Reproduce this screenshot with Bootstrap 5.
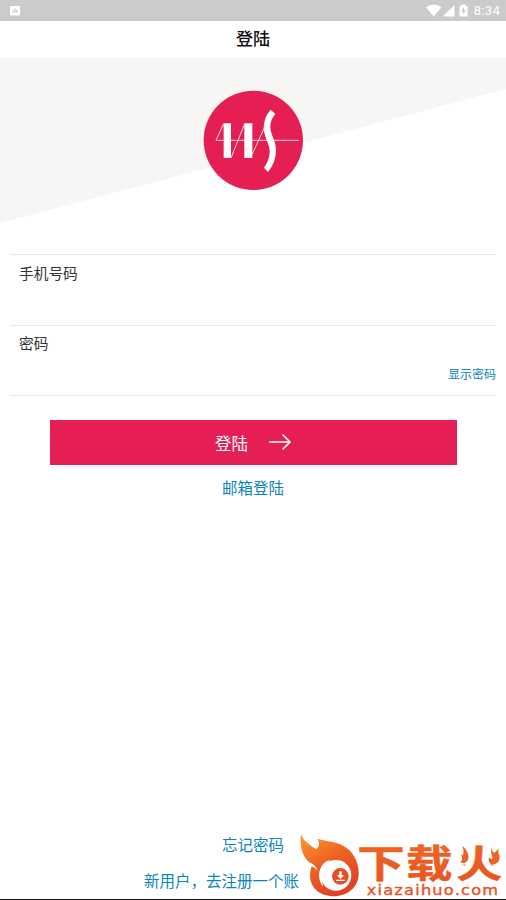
<!DOCTYPE html>
<html lang="zh-CN">
<head>
<meta charset="utf-8">
<meta name="viewport" content="width=device-width, initial-scale=1">
<title>登陆</title>
<link rel="stylesheet" href="https://cdn.jsdelivr.net/npm/bootstrap@5.3.0/dist/css/bootstrap.min.css">
<style>
body { font-family: "Noto Sans", "Noto Sans CJK SC", sans-serif; color: #333; }
svg { display: block; flex: none; }
.screen { height: 900px; border-bottom: 1px solid #111; }
.status { height: 21px; background: #cbcbcb; color: #fff; padding: 0 6px 0 10px; }
.clock { font: 13px/21px Roboto, sans-serif; letter-spacing: .3px; }
.title { height: 37px; font-size: 17px; line-height: 36px; color: #111; font-weight: 500; }
.hero { height: 166px; padding-top: 22px; }
.hero::before { content: ""; position: absolute; inset: 0; background: #f7f6f5; clip-path: polygon(0 0, 100% 0, 100% 31px, 0 165px); }
.fields { margin: 30px 10px 0; border-top: 1px solid #e9e9e9; }
.entry { border-bottom: 1px solid #e9e9e9; padding: 8px 0 0 9px; font-size: 14.7px; line-height: 20px; }
.phone { height: 71px; }
.pass { height: 70px; padding-top: 7px; }
.show-pass { font-size: 12px; margin-top: 12px; }
.blue { color: #0c84bd; text-decoration: none; }
.login { margin: 24px 49px 0 50px; height: 45px; background: #e51e54; color: #fff; font-size: 16.5px; border-radius: 0; padding: 3px 0 0 4px; }
.login:hover { background: #d01849; color: #fff; }
.login svg { margin-top: -4px; }
.alt { font-size: 15.5px; line-height: 24px; }
.mail { margin-top: 11px; }
.foot { padding-bottom: 6px; gap: 12px; }
.register { margin-right: 63px; }
.brand { position: absolute; left: 290px; top: 825px; }
</style>
<script src="https://cdn.jsdelivr.net/npm/bootstrap@5.3.0/dist/js/bootstrap.bundle.min.js"></script>
</head>
<body>
<main class="screen position-relative d-flex flex-column overflow-hidden">
  <div class="status d-flex align-items-center">
    <svg width="10" height="10" viewBox="0 0 10 10"><rect width="10" height="9.5" rx="1" fill="#fff"/><path d="M3 7V4.5L5 3l2 1.5V7M3.5 5.5h3" fill="none" stroke="#c4c4c4"/></svg>
    <svg class="ms-auto" width="44" height="16" viewBox="0 0 44 16" fill="#fff"><path d="M0 4.2Q7.700 -1.200 15.500 4.200L7.700 13.500Z"/><path d="M16.500 13.500L28.500 2v11.500Z"/><path fill-rule="evenodd" d="M33.500 3h2V1.500h4V3h2v10.500h-8Zm4.500 1l-3 4.500h2v3l3-4.500h-2Z"/></svg>
    <span class="clock ms-1">8:34</span>
  </div>
  <div class="title text-center">登陆</div>
  <div class="hero position-relative d-flex justify-content-center">
    <svg class="position-relative" width="120" height="120" viewBox="0 0 360 360">
      <circle cx="181" cy="181" r="149" fill="#e51e54"/>
      <path d="M92 130h22v104H92zM154 130h24v104h-24z" fill="#fff"/>
      <path d="M318 181H69L92 131M114 234L155 131M178 222L216 139" fill="none" stroke="#fff" stroke-width="2.500"/>
      <path d="M233 89L247 102Q231 120 232 142C233 165 249 184 249 210Q249 247 225 276L213 263Q230 240 230 214C230 190 212 171 212 142Q213 111 233 89Z" fill="#fff"/>
    </svg>
  </div>
  <form class="fields">
    <div class="entry phone">手机号码</div>
    <div class="entry pass d-flex flex-column">密码<a href="#" class="blue show-pass align-self-end">显示密码</a></div>
  </form>
  <button class="btn login d-flex align-items-center justify-content-center" type="button">登陆
    <svg class="ms-3" width="32" height="20" viewBox="0 0 32 20" fill="none" stroke="#fff" stroke-width="1.600"><path d="M5 10h21M18.500 2.500L26 10l-7.500 7.500"/></svg>
  </button>
  <a href="#" class="blue alt mail text-center">邮箱登陆</a>
  <div class="foot mt-auto d-flex flex-column align-items-center">
    <a href="#" class="blue alt">忘记密码</a>
    <a href="#" class="blue alt register">新用户，去注册一个账</a>
  </div>
  <svg class="brand" width="216" height="74" viewBox="0 0 648 222">
    <defs>
      <linearGradient id="flame" x1="0" y1="0" x2=".5" y2="1"><stop stop-color="#ff9a2b"/><stop offset=".5" stop-color="#ee6425"/><stop offset="1" stop-color="#df4227"/></linearGradient>
      <linearGradient id="ink" x1="0" y1="0" x2="0" y2="1"><stop stop-color="#f16a21"/><stop offset="1" stop-color="#e85222"/></linearGradient>
      <clipPath id="stems"><path d="M549 40H586V119H650V190H490V119H549Z"/></clipPath>
    </defs>
    <path d="M33 27C40 49 61 60 78 73C88 65 91 53 82 41C108 50 148 48 174 72C197 92 207 120 206 151C203 188 172 214 132 214C88 214 60 188 60 151Q60 135 65 124Q75 128 82 137Q78 120 58 112C35 94 29 59 33 27Z" fill="url(#flame)"/>
    <circle cx="138" cy="151" r="46" fill="#fff"/>
    <path d="M100 186C75 155 90 111 121 105C96 126 91 158 100 186Z" fill="#fff"/>
    <circle cx="151" cy="154" r="25" fill="#e64e27"/>
    <path d="M148 139h7v12h7l-10.500 11L141 151h7zM139 164h25v4h-25z" fill="#fff"/>
    <g font-family="Noto Sans CJK SC, sans-serif" font-weight="700" fill="url(#ink)" stroke="#ec5d22" stroke-width="2">
      <text transform="translate(202 156) scale(1 .8)" font-size="142">下</text>
      <text transform="translate(348 156) scale(.98 .8)" font-size="142">载</text>
      <g clip-path="url(#stems)"><text transform="translate(498 156) scale(.98 .8)" font-size="142">火</text></g>
    </g>
    <path d="M517 62Q538 80 535 102Q528 120 510 112Q521 104 513 89Q526 94 517 62ZM606 61Q601 76 613 84L627 70Q622 82 629 93Q630 119 605 119Q593 113 597 97Q605 106 608 98Q600 81 606 61Z" fill="#ee6425"/>
    <text x="230" y="209" textLength="398" lengthAdjust="spacingAndGlyphs" font-family="'DejaVu Sans', sans-serif" font-size="40" letter-spacing="3" fill="#e95122" stroke="#e95122" stroke-width="1">xiazaihuo.com</text>
  </svg>
</main>
</body>
</html>
